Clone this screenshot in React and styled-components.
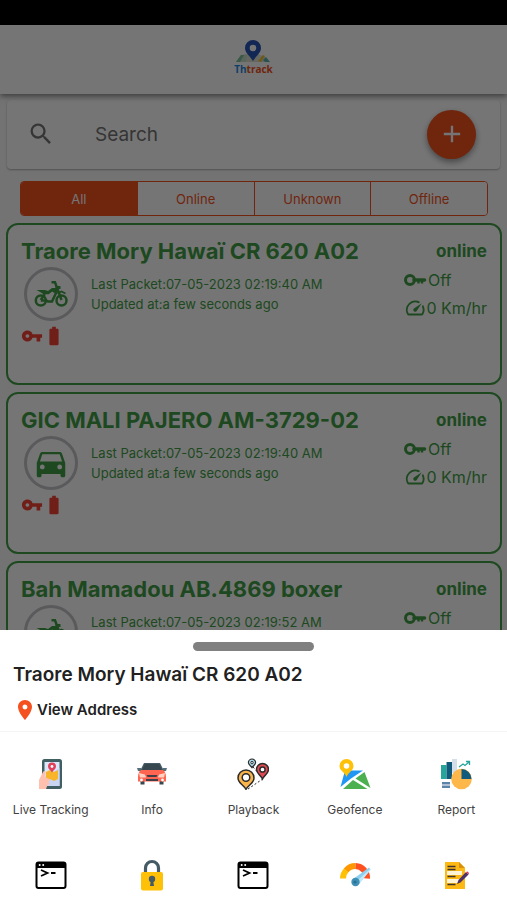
import React, { useState } from "react";
import styled, { createGlobalStyle } from "styled-components";
import { MdAdd, MdBatteryFull, MdDirectionsCar, MdLocationOn, MdSearch, MdSpeed, MdVpnKey } from "react-icons/md";

const vehicles = [
  { id: 1, name: "Traore Mory Hawaï CR 620 A02", type: "bike", packet: "07-05-2023 02:19:40 AM" },
  { id: 2, name: "GIC MALI PAJERO AM-3729-02", type: "car", packet: "07-05-2023 02:19:40 AM" },
  { id: 3, name: "Bah Mamadou AB.4869 boxer", type: "bike", packet: "07-05-2023 02:19:52 AM" },
];

const filters = ["All", "Online", "Unknown", "Offline"];

function Logo() {
  return (
    <LogoBox>
      <svg width="36" height="24" viewBox="0 0 36 24" aria-hidden="true">
        <path d="M1 22 6 15l7-1-1 8z" fill="#c3dccb" />
        <path d="M1 22l5-7 3 0-4 7z" fill="#7fbf9a" />
        <path d="M12 14h12l1 8H11z" fill="#dfe3cf" />
        <path d="M24 15l5 1 6 6H25z" fill="#d9dfe6" />
        <path d="M23 21l5-6 2 1-4 6z" fill="#f2c230" />
        <path d="M28 20l3-3 4 5h-5z" fill="#5fb1a5" />
        <path d="M18 0a8 8 0 0 0-8 8c0 5 5 8 8 13 3-5 8-8 8-13a8 8 0 0 0-8-8z" fill="#2a56b8" />
        <circle cx="18" cy="8" r="3.3" fill="#fff" />
      </svg>
      <LogoText><span>Th</span>track</LogoText>
    </LogoBox>
  );
}

function BikeIcon() {
  return (
    <svg width="34" height="28" viewBox="0 0 34 28" fill="none" stroke="currentColor" strokeWidth="2.5" aria-hidden="true">
      <circle cx="6.800" cy="20.500" r="5" />
      <circle cx="27.500" cy="20.500" r="5" />
      <path d="M17.500 2.300h3.500L27.500 20" />
      <path d="M21.500 7.500h5" strokeWidth="3" />
      <path d="M2.500 10h8.500l3 1 4-3h5l1.200 3.500-4 1.500-2-1.500-3.500 2.700H9.500L7 12.500z" fill="currentColor" stroke="none" />
      <path d="M6.800 20l4-6M6.800 20.500h5.700l1.500 1h4l4.500-9.500" />
      <path d="M23.500 13.500l4-2 4 2" strokeWidth="1.800" />
    </svg>
  );
}

function KeyIcon() {
  return (
    <svg width="24" height="14" viewBox="0 0 24 14" fill="none" stroke="currentColor" aria-hidden="true">
      <circle cx="6" cy="7" r="4.500" strokeWidth="3" />
      <path d="M10 7h10.500" strokeWidth="3.600" strokeLinecap="round" />
      <path d="M14.500 8v2.500M18 8v2.500" strokeWidth="2.400" />
    </svg>
  );
}

function TrackingIcon() {
  return (
    <svg width="32" height="32" viewBox="0 0 32 32" aria-hidden="true">
      <rect x="7" y="1" width="20" height="30" rx="2.500" fill="#3f5f63" />
      <rect x="9.500" y="4" width="15" height="24" fill="#dbe6fb" />
      <path d="M9.500 19l15-9v18h-15z" fill="#c8d5f3" />
      <path d="M11 14l4-2 4 2 4-2v9l-4 2-4-2-4 2z" fill="#f9b52a" />
      <path d="M17 4.500a4 4 0 0 0-4 4c0 2.500 2.500 3.500 4 6 1.500-2.500 4-3.500 4-6a4 4 0 0 0-4-4z" fill="#e23f5b" />
      <circle cx="17" cy="8.500" r="1.400" fill="#fff" />
      <path d="M4 31V22l4-8c1-2 3-1 2.500 1L10 19l4 2c1.500 1 .5 3-1 2.500l1 1c1 1 0 3-1.500 2.500L11 31z" fill="#ffc1ad" />
    </svg>
  );
}

function InfoIcon() {
  return (
    <svg width="32" height="32" viewBox="0 0 32 32" aria-hidden="true">
      <path d="M4.500 22h4v4.500h-4zM23.500 22h4v4.500h-4z" fill="#37474f" />
      <path d="M8 5h16l4 8H4z" fill="#455a64" />
      <path d="M9 6h14l3 6H6z" fill="#37474f" />
      <path d="M1 10h4v3H2zM31 10h-4v3h3z" fill="#546e7a" />
      <path d="M5 12h22c2 1.500 3 4 3 7v4.500H2V19c0-3 1-5.500 3-7z" fill="#ff6550" />
      <path d="M3 15l6 1.500 1 3H4zM29 15l-6 1.500-1 3h6z" fill="#ffd2c4" />
      <path d="M10.500 17h11l-1 2h-9zM10 21h12v2H10z" fill="#3f3f4a" />
      <circle cx="5.500" cy="22" r="1.400" fill="#fff" />
      <circle cx="26.500" cy="22" r="1.400" fill="#fff" />
    </svg>
  );
}

function PlaybackIcon() {
  return (
    <svg width="32" height="32" viewBox="0 0 32 32" stroke="#2b2b2b" strokeWidth="1.500" aria-hidden="true">
      <path d="M11 31l14-9.500M16 9l4 4.500" fill="none" strokeWidth="1" strokeDasharray="2 2" />
      <path d="M15 1a3.600 3.600 0 0 0-3.600 3.600c0 2 2.200 3 3.600 5 1.400-2 3.600-3 3.600-5A3.600 3.600 0 0 0 15 1z" fill="#a8dbe8" strokeWidth="1.200" />
      <circle cx="15" cy="4.600" r="1.200" fill="#fff" strokeWidth="1" />
      <path d="M25.500 5.500a6 6 0 0 0-6 6c0 4 4 5.500 6 9.500 2-4 6-5.500 6-9.500a6 6 0 0 0-6-6z" fill="#e04a50" />
      <circle cx="25.500" cy="11.500" r="2.600" fill="#fff" />
      <path d="M9 12a8 8 0 0 0-8 8c0 5 5 6.500 8 11.300 3-4.800 8-6.300 8-11.300a8 8 0 0 0-8-8z" fill="#f9b44c" />
      <circle cx="9" cy="19.500" r="3.800" fill="#fff" />
    </svg>
  );
}

function GeofenceIcon() {
  return (
    <svg width="32" height="32" viewBox="0 0 32 32" aria-hidden="true">
      <path d="M6 12.500h18L12 20.500 1.500 29z" fill="#2196f3" />
      <path d="M25.500 14l6 16L16.500 20.500z" fill="#4caf50" />
      <path d="M14 22L28.500 31H4z" fill="#4caf50" />
      <path d="M7.500 1a7 7 0 0 0-7 7c0 4.500 5 6 7 11 2-5 7-6.500 7-11a7 7 0 0 0-7-7z" fill="#ffc107" />
      <circle cx="7.500" cy="8" r="2.800" fill="#fff" />
    </svg>
  );
}

function ReportIcon() {
  return (
    <svg width="32" height="32" viewBox="0 0 32 32" aria-hidden="true">
      <path d="M1 7h5.500v14H1z" fill="#27a59a" />
      <path d="M6.500 4H12v17H6.500z" fill="#125a7c" />
      <path d="M12 1h5v14h-5z" fill="#d5dfea" />
      <path d="M2 24h8v2.500H2zM2 27.500h8V30H2z" fill="#5c84a8" />
      <circle cx="21.500" cy="21" r="10.300" fill="#fdb74a" />
      <path d="M21.500 21V11A10 10 0 0 1 31.500 21z" fill="#125a7c" />
      <path d="M19 9l4-3 2 1.500L29 4M26 3.500h3.500V7" fill="none" stroke="#27a59a" strokeWidth="1.300" />
    </svg>
  );
}

function TerminalIcon() {
  return (
    <svg width="32" height="32" viewBox="0 0 32 32" aria-hidden="true">
      <rect x="1.500" y="3.500" width="29" height="25.500" rx="2" fill="#fff" stroke="#000" strokeWidth="2" />
      <path d="M1.500 4h29v5h-29z" fill="#000" />
      <circle cx="4.700" cy="6" r="1" fill="#fff" />
      <circle cx="8.200" cy="6" r="1" fill="#fff" />
      <path d="M6 11l6.500 3L6 17M16 14h4.500" fill="none" stroke="#000" strokeWidth="1.800" />
    </svg>
  );
}

function LockIcon() {
  return (
    <svg width="32" height="32" viewBox="0 0 32 32" aria-hidden="true">
      <path d="M9.500 14V9a6.500 6.500 0 0 1 13 0v5" fill="none" stroke="#455a64" strokeWidth="3.200" />
      <rect x="5" y="13" width="22" height="18.500" rx="2" fill="#ffc107" />
      <circle cx="16" cy="20" r="3.200" fill="#455a64" />
      <path d="M15 20h2l1 7h-4z" fill="#455a64" />
    </svg>
  );
}

function GaugeIcon() {
  return (
    <svg width="32" height="32" viewBox="0 0 32 32" fill="none" strokeWidth="6" aria-hidden="true">
      <path d="M4 19.500a12 12 0 0 1 3.500-8.500" stroke="#ffc107" />
      <path d="M7.200 11.300A12 12 0 0 1 16.500 7" stroke="#ff9800" />
      <path d="M16.500 7A12 12 0 0 1 28 19.500" stroke="#ff5020" />
      <path d="M13.500 20.500L30 8.500l1.500 2L20 25z" fill="#8fd0ee" />
      <path d="M17 23L31 10l.5 1L20 25z" fill="#c5e8f7" />
      <circle cx="16.500" cy="23" r="4.200" fill="#3d8fb5" />
      <circle cx="16" cy="23" r="1.600" fill="#2a6f94" />
    </svg>
  );
}

function NoteIcon() {
  return (
    <svg width="32" height="32" viewBox="0 0 32 32" aria-hidden="true">
      <path d="M5 3h14l6 6v21H5z" fill="#fdb913" />
      <path d="M19 3l6 6h-6z" fill="#d9900a" />
      <path d="M7 12h15v4H7zM7 20h12v4H7z" fill="#fff3d6" />
      <path d="M7.500 7.500h8M7.500 10.500h8M7.500 17.500h8M7.500 25.500h8" stroke="#3d3430" strokeWidth="1.400" />
      <path d="M17 25l1.500-4L26 13l2.500 2.500-8 8z" fill="#4b3167" />
      <path d="M26 13l1.500-.5 1.500 1.500-.500 1.500z" fill="#e0325c" />
    </svg>
  );
}

const actions = [
  { label: "Live Tracking", icon: <TrackingIcon /> },
  { label: "Info", icon: <InfoIcon /> },
  { label: "Playback", icon: <PlaybackIcon /> },
  { label: "Geofence", icon: <GeofenceIcon /> },
  { label: "Report", icon: <ReportIcon /> },
];

const moreActions = [
  { label: "Command", icon: <TerminalIcon /> },
  { label: "Lock", icon: <LockIcon /> },
  { label: "Saved Command", icon: <TerminalIcon /> },
  { label: "Odometer", icon: <GaugeIcon /> },
  { label: "Notes", icon: <NoteIcon /> },
];

function VehicleCard({ vehicle }) {
  return (
    <Card>
      <CardTop>
        <h2>{vehicle.name}</h2>
        <strong>online</strong>
      </CardTop>
      <CardBody>
        <Avatar>{vehicle.type === "car" ? <MdDirectionsCar size={38} /> : <BikeIcon />}</Avatar>
        <Times>
          <p>Last Packet:{vehicle.packet}</p>
          <p>Updated at:a few seconds ago</p>
        </Times>
        <Stats>
          <Stat><KeyIcon />Off</Stat>
          <Stat><MdSpeed size={24} />0 Km/hr</Stat>
        </Stats>
      </CardBody>
      <Alerts>
        <MdVpnKey size={22} />
        <MdBatteryFull size={22} />
      </Alerts>
    </Card>
  );
}

function App() {
  const [filter, setFilter] = useState("All");

  return (
    <Page>
      <GlobalStyle />
      <StatusBar />
      <Screen>
        <Header><Logo /></Header>
        <SearchBar>
          <MdSearch size={28} />
          <input type="search" placeholder="Search" aria-label="Search" />
          <AddButton aria-label="Add"><MdAdd size={28} /></AddButton>
        </SearchBar>
        <Filters>
          {filters.map((name) => (
            <Filter key={name} $active={filter === name} onClick={() => setFilter(name)}>{name}</Filter>
          ))}
        </Filters>
        <List>
          {vehicles.map((vehicle) => (
            <VehicleCard key={vehicle.id} vehicle={vehicle} />
          ))}
        </List>
        <Scrim />
      </Screen>
      <Sheet role="dialog" aria-label="Vehicle">
        <Handle />
        <SheetTitle>Traore Mory Hawaï CR 620 A02</SheetTitle>
        <Address href="#address"><MdLocationOn size={24} />View Address</Address>
        <Actions>
          {actions.map((action) => (
            <Action key={action.label}>{action.icon}<span>{action.label}</span></Action>
          ))}
          {moreActions.map((action) => (
            <Action key={action.label} aria-label={action.label}>{action.icon}</Action>
          ))}
        </Actions>
      </Sheet>
    </Page>
  );
}

const GlobalStyle = createGlobalStyle`
  * {
    box-sizing: border-box;
  }

  body {
    margin: 0;
    font-family: Inter, "Liberation Sans", sans-serif;
  }

  button, input {
    font-family: inherit;
  }

  h2, p {
    margin: 0;
  }
`;

const Page = styled.div`
  display: flex;
  flex-direction: column;
  height: 100vh;
  overflow: hidden;
`;

const StatusBar = styled.div`
  flex: none;
  height: 25px;
  background: black;
`;

const Screen = styled.main`
  position: relative;
  flex: 1;
  overflow: hidden;
  background: #fafafa;
`;

const Scrim = styled.div`
  position: absolute;
  inset: 0;
  z-index: 2;
  background: rgba(0, 0, 0, 0.54);
`;

const Header = styled.header`
  position: relative;
  z-index: 1;
  display: flex;
  justify-content: center;
  height: 69px;
  padding-top: 15px;
  background: white;
  box-shadow: 0 2px 6px rgba(0, 0, 0, 0.5);
`;

const LogoBox = styled.div`
  display: flex;
  flex-direction: column;
  align-items: center;
`;

const LogoText = styled.div`
  font-family: "Open Sans", sans-serif;
  font-size: 10px;
  line-height: 11px;
  font-weight: 700;
  color: #f4511e;

  span {
    color: #1e88e5;
  }
`;

const SearchBar = styled.div`
  display: flex;
  align-items: center;
  height: 69px;
  margin: 6px 7px 12px;
  padding: 0 24px 1px 20px;
  background: white;
  border-radius: 4px;
  box-shadow: 0 1px 2px rgba(0, 0, 0, 0.3);
  color: #757575;

  input {
    flex: 1;
    min-width: 0;
    margin-left: 40px;
    padding: 0;
    border: none;
    outline: none;
    background: none;
    font-size: 19px;
  }

  input::placeholder {
    color: #757575;
  }
`;

const AddButton = styled.button`
  display: flex;
  align-items: center;
  justify-content: center;
  width: 49px;
  height: 49px;
  padding: 0;
  border: none;
  border-radius: 50%;
  background: #f4511e;
  color: white;
  box-shadow: 0 3px 6px rgba(0, 0, 0, 0.4);
`;

const Filters = styled.div`
  display: flex;
  height: 35px;
  margin: 0 19px 0 20px;
  border: 1px solid #f4511e;
  border-radius: 4px;
  overflow: hidden;
`;

const Filter = styled.button`
  flex: 1;
  padding: 0;
  border: none;
  background: ${(props) => (props.$active ? "#f4511e" : "white")};
  color: ${(props) => (props.$active ? "white" : "#f4511e")};
  font-size: 13px;

  & + & {
    border-left: 1px solid #f4511e;
  }
`;

const List = styled.div`
  display: flex;
  flex-direction: column;
  gap: 7px;
  padding: 7px 5px 7px 6px;
`;

const Card = styled.article`
  padding: 12px 13px 36px;
  border: 2px solid #43a047;
  border-radius: 12px;
  background: white;
  color: #43a047;
`;

const CardTop = styled.div`
  display: flex;
  align-items: center;
  justify-content: space-between;
  line-height: 28px;

  h2 {
    font-size: 22px;
    font-weight: 700;
  }

  strong {
    font-size: 17px;
    font-weight: 700;
  }
`;

const CardBody = styled.div`
  display: flex;
`;

const Avatar = styled.div`
  display: flex;
  align-items: center;
  justify-content: center;
  width: 54px;
  height: 54px;
  margin: 2px 0 0 3px;
  border: 3px solid #c4c4c8;
  border-radius: 50%;
`;

const Times = styled.div`
  flex: 1;
  padding: 9px 0 0 13px;
  font-size: 13px;
  line-height: 20px;
`;

const Stats = styled.div`
  width: 83px;
  padding-top: 1px;
  font-size: 16px;
  line-height: 28px;
  white-space: nowrap;
`;

const Stat = styled.div`
  display: flex;
  align-items: center;
`;

const Alerts = styled.div`
  display: flex;
  margin-top: 3px;
  color: #f44336;
`;

const Sheet = styled.section`
  display: flex;
  flex-direction: column;
  position: fixed;
  z-index: 3;
  right: 0;
  bottom: 0;
  left: 0;
  height: 30%;
  overflow: hidden;
  background: white;
`;

const Handle = styled.div`
  flex: none;
  align-self: center;
  width: 24%;
  height: 9px;
  margin-top: 12px;
  border-radius: 5px;
  background: #808080;
`;

const SheetTitle = styled.h2`
  padding: 12px 13px 0;
  color: #212121;
  font-size: 19px;
  line-height: 24px;
  font-weight: 600;
`;

const Address = styled.a`
  display: flex;
  align-items: center;
  padding: 11px 13px 9px;
  color: #212121;
  font-size: 15px;
  font-weight: 600;
  line-height: 24px;
  text-decoration: none;
  border-bottom: 1px solid #f5f5f5;

  svg {
    color: #f4511e;
  }
`;

const Actions = styled.div`
  display: grid;
  grid-template-columns: repeat(5, 1fr);
  grid-auto-rows: 101px;
`;

const Action = styled.button`
  display: flex;
  flex-direction: column;
  align-items: center;
  gap: 12px;
  padding: 26px 0 0;
  border: none;
  background: none;
  color: #424242;
  font-size: 12px;
  line-height: 16px;
  white-space: nowrap;
`;

export default App;
